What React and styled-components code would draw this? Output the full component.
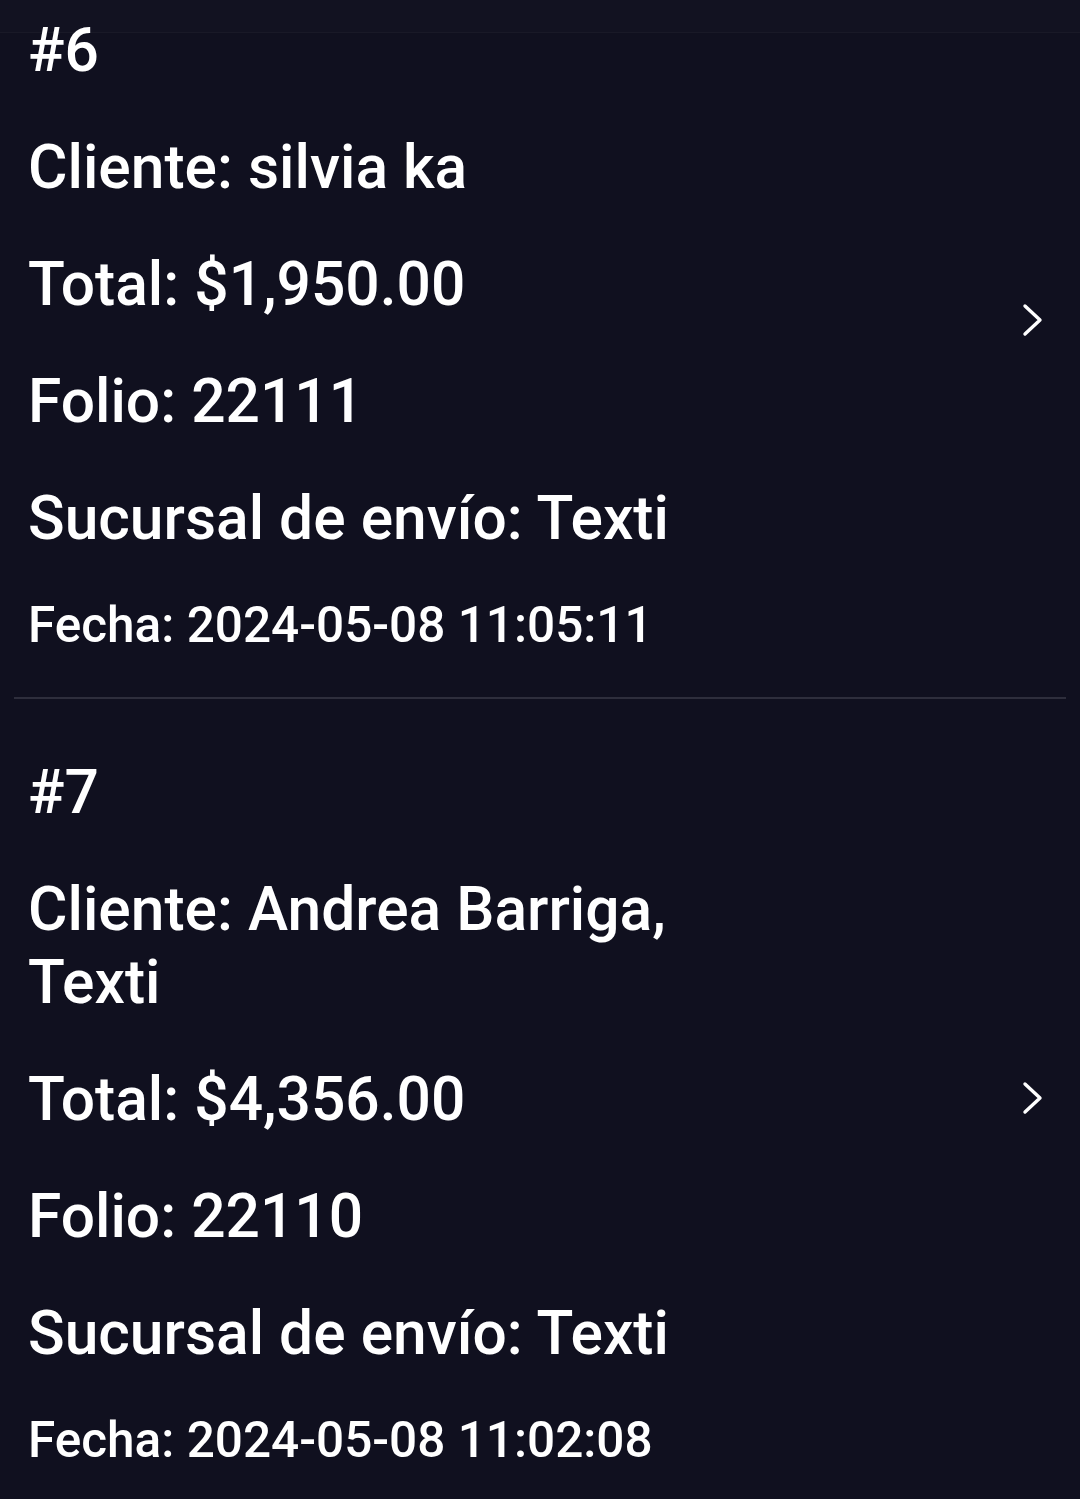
import React from 'react';
import styled, { createGlobalStyle } from 'styled-components';

const GlobalStyle = createGlobalStyle`
    html, body {
        margin:0;
        padding:0;
        background:#10101f;
    }
    body{
        font-family: Roboto, "Noto Sans", Arial, sans-serif;
        color:#ffffff;
    }
`;

const orders = [
    {
        num: 6,
        cliente: 'silvia ka',
        total: '$1,950.00',
        folio: '22111',
        sucursal: 'Texti',
        fecha: '2024-05-08 11:05:11',
    },
    {
        num: 7,
        cliente: 'Andrea Barriga, Texti',
        total: '$4,356.00',
        folio: '22110',
        sucursal: 'Texti',
        fecha: '2024-05-08 11:02:08',
    },
];

const Chevron = () => (
    <svg width="24" height="34" viewBox="0 0 24 34" fill="none">
        <polyline points="4,3 19,17 4,31" stroke="#ffffff" strokeWidth="3.4" strokeLinecap="round" strokeLinejoin="round" />
    </svg>
);

const App = () => {
    return (
        <>
            <GlobalStyle />
            <Page>
                <TopShade />
                {orders.map((o, i) => (
                    <React.Fragment key={o.num}>
                        {i > 0 && <Divider />}
                        <Item $first={i === 0}>
                            <Info>
                                <Line>#{o.num}</Line>
                                <Line>Cliente: {o.cliente}</Line>
                                <Line>Total: {o.total}</Line>
                                <Line>Folio: {o.folio}</Line>
                                <Line>Sucursal de envío: {o.sucursal}</Line>
                                <Line $small>Fecha: {o.fecha}</Line>
                            </Info>
                            <Arrow>
                                <Chevron />
                            </Arrow>
                        </Item>
                    </React.Fragment>
                ))}
            </Page>
        </>
    );
};

const Page = styled.div`
    position:relative;
    min-height:1499px;
    background:#10101f;
    overflow:hidden;
`;

const TopShade = styled.div`
    position:absolute;
    top:0;
    left:0;
    right:0;
    height:32px;
    background:rgba(255,255,255,0.012);
    border-bottom:1px solid rgba(255,255,255,0.03);
`;

const Item = styled.div`
    display:flex;
    align-items:center;
    padding:${p => (p.$first ? 14 : 57)}px 28px 44px;
`;

const Info = styled.div`
    flex:1;
    max-width:700px;
    display:flex;
    flex-direction:column;
    gap:44px;
`;

const Line = styled.div`
    font-size:${p => (p.$small ? 49.5 : 60.5)}px;
    font-weight:500;
    line-height:${p => (p.$small ? 56 : 73)}px;
    margin-top:${p => (p.$small ? -2 : 0)}px;
`;

const Arrow = styled.div`
    margin-left:auto;
    margin-right:7px;
    margin-bottom:28px;
    display:flex;
`;

const Divider = styled.div`
    height:2px;
    margin:0 14px;
    background:#2e2e3c;
`;

export default App;
